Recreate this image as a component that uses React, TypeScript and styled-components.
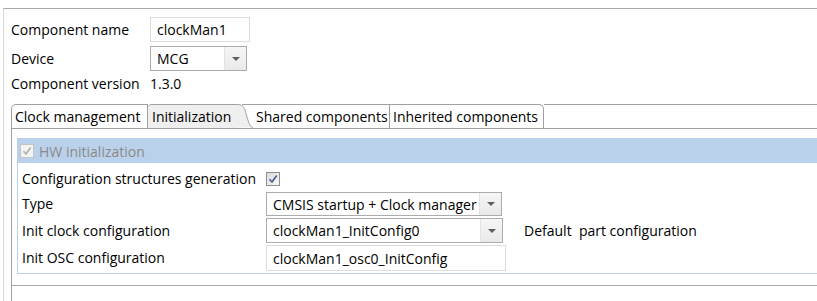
import React from 'react';
import styled, { createGlobalStyle, css } from 'styled-components';

const GlobalStyle = createGlobalStyle`
  html, body {
    margin: 0;
    padding: 0;
    background: #ffffff;
  }
  body {
    font-family: "Open Sans", "Noto Sans", sans-serif;
    font-size: 14px;
    color: #000000;
  }
`;

const Page = styled.div`
  width: 817px;
  height: 301px;
  overflow: hidden;
  box-sizing: border-box;
  padding: 8px 0 0 3px;
`;

const Frame = styled.div`
  height: 100%;
  box-sizing: border-box;
  border-top: 1px solid #a9a9a9;
  border-left: 1px solid #d8d8d8;
  padding-left: 7px;
  display: flex;
  flex-direction: column;
`;

const Header = styled.div`
  display: grid;
  grid-template-columns: 139px auto;
  grid-template-rows: 25px 25px 18px;
  row-gap: 4px;
  padding-top: 8px;
  align-items: center;
`;

const Label = styled.span`
  white-space: nowrap;
  line-height: 18px;
`;

const TextBox = styled.div<{ w: number; h: number }>`
  width: ${p => p.w}px;
  height: ${p => p.h}px;
  box-sizing: border-box;
  border: 1px solid #dcdcdc;
  padding-left: 6px;
  display: flex;
  align-items: center;
  white-space: nowrap;
  background: #ffffff;
`;

const Combo = styled.div<{ w: number; h: number }>`
  width: ${p => p.w}px;
  height: ${p => p.h}px;
  box-sizing: border-box;
  border: 1px solid #acacac;
  display: flex;
  align-items: stretch;
  background: #ffffff;
`;

const ComboText = styled.span`
  flex: 1;
  overflow: hidden;
  white-space: nowrap;
  padding-left: 6px;
  display: flex;
  align-items: center;
`;

const ComboButton = styled.span`
  width: 21px;
  flex: none;
  background: linear-gradient(#f6f6f6, #e9e9e9);
  border-left: 1px solid #e2e2e2;
  display: flex;
  align-items: center;
  justify-content: center;
  &::after {
    content: '';
    width: 0;
    height: 0;
    border-left: 4px solid transparent;
    border-right: 4px solid transparent;
    border-top: 4px solid #5e5e5e;
  }
`;

const Folder = styled.div`
  flex: 1;
  margin-top: 11px;
  display: flex;
  flex-direction: column;
`;

const TabStrip = styled.div`
  display: flex;
  height: 25px;
  box-sizing: border-box;
  border-bottom: 1px solid #a0a0a0;
`;

const Tab = styled.div<{ w: number; first?: boolean; last?: boolean; selected?: boolean }>`
  width: ${p => p.w}px;
  flex: none;
  box-sizing: border-box;
  border-top: 1px solid #a0a0a0;
  border-right: 1px solid #a0a0a0;
  padding-left: 3px;
  display: flex;
  align-items: center;
  white-space: nowrap;
  background: ${p => (p.selected ? '#efefef' : '#ffffff')};
  ${p =>
    p.first &&
    css`
      border-left: 1px solid #a0a0a0;
      border-top-left-radius: 5px;
    `}
  ${p =>
    p.last &&
    css`
      border-top-right-radius: 5px;
    `}
  ${p =>
    p.selected &&
    css`
      border-right: none;
      border-top-left-radius: 4px;
      padding-left: 4px;
    `}
`;

const TabCurve = styled.svg`
  flex: none;
  display: block;
`;

const TabFill = styled.div`
  flex: 1;
  border-top: 1px solid #a0a0a0;
`;

const Content = styled.div`
  border-left: 1px solid #a0a0a0;
  border-bottom: 1px solid #a9a9a9;
  padding: 9px 0 11px 5px;
`;

const Section = styled.div`
  border: 1px solid #b8d0ea;
  border-right: none;
`;

const SectionBar = styled.div`
  height: 24px;
  background: #bad1eb;
  display: flex;
  align-items: center;
  gap: 5px;
  padding-left: 2px;
  color: #8a8a8a;
`;

const Rows = styled.div`
  display: grid;
  grid-template-columns: 244px auto 1fr;
  grid-template-rows: 22px 24px 25px 26px;
  row-gap: 2px;
  padding: 5px 0 2px 4px;
  align-items: center;
`;

const Note = styled.span`
  white-space: pre;
  padding-left: 18px;
`;

const Below = styled.div`
  flex: 1;
  border-left: 1px solid #a0a0a0;
`;

const Box = styled.span<{ disabled?: boolean }>`
  width: 14px;
  height: 14px;
  box-sizing: border-box;
  border: 1px solid ${p => (p.disabled ? '#c4c4c4' : '#8f8f8f')};
  background: ${p => (p.disabled ? '#f4f4f4' : 'linear-gradient(135deg, #dcdcdc, #f6f6f6)')};
  display: inline-flex;
  align-items: center;
  justify-content: center;
`;

const Check: React.FC<{ disabled?: boolean }> = ({ disabled }) => (
  <Box disabled={disabled}>
    <svg width="10" height="10" viewBox="0 0 10 10">
      <path
        d="M1.5 5.2 L4 8 L8.7 1.5"
        fill="none"
        stroke={disabled ? '#b0b0b0' : '#4a5c94'}
        strokeWidth="1.7"
      />
    </svg>
  </Box>
);

const ComboBox: React.FC<{ w: number; h: number; value: string }> = ({ w, h, value }) => (
  <Combo w={w} h={h}>
    <ComboText>{value}</ComboText>
    <ComboButton />
  </Combo>
);

export default function App() {
  return (
    <Page>
      <GlobalStyle />
      <Frame>
        <Header>
          <Label>Component name</Label>
          <TextBox w={100} h={25}>clockMan1</TextBox>
          <Label>Device</Label>
          <ComboBox w={97} h={25} value="MCG" />
          <Label>Component version</Label>
          <Label>1.3.0</Label>
        </Header>

        <Folder>
          <TabStrip>
            <Tab w={137} first>Clock management</Tab>
            <Tab w={89} selected>Initialization</Tab>
            <TabCurve width="16" height="24" viewBox="0 0 16 24">
              <path d="M0 0.5 C5 0.5 6 2 8 6 C10 12 12 23.5 16 23.5 L0 23.5 Z" fill="#efefef" />
              <path d="M0 0.5 C5 0.5 6 2 8 6 C10 12 12 23.5 16 23.5" fill="none" stroke="#a0a0a0" />
              <path d="M5 0.5 L16 0.5" stroke="#a0a0a0" />
            </TabCurve>
            <Tab w={137}>Shared components</Tab>
            <Tab w={154} last>Inherited components</Tab>
            <TabFill />
          </TabStrip>

          <Content>
            <Section>
              <SectionBar>
                <Check disabled />
                <span>HW initialization</span>
              </SectionBar>
              <Rows>
                <Label>Configuration structures generation</Label>
                <Check />
                <span />

                <Label>Type</Label>
                <ComboBox w={236} h={24} value="CMSIS startup + Clock manager" />
                <span />

                <Label>Init clock configuration</Label>
                <ComboBox w={237} h={25} value="clockMan1_InitConfig0" />
                <Note>Default  part configuration</Note>

                <Label>Init OSC configuration</Label>
                <TextBox w={240} h={26}>clockMan1_osc0_InitConfig</TextBox>
                <span />
              </Rows>
            </Section>
          </Content>
          <Below />
        </Folder>
      </Frame>
    </Page>
  );
}
